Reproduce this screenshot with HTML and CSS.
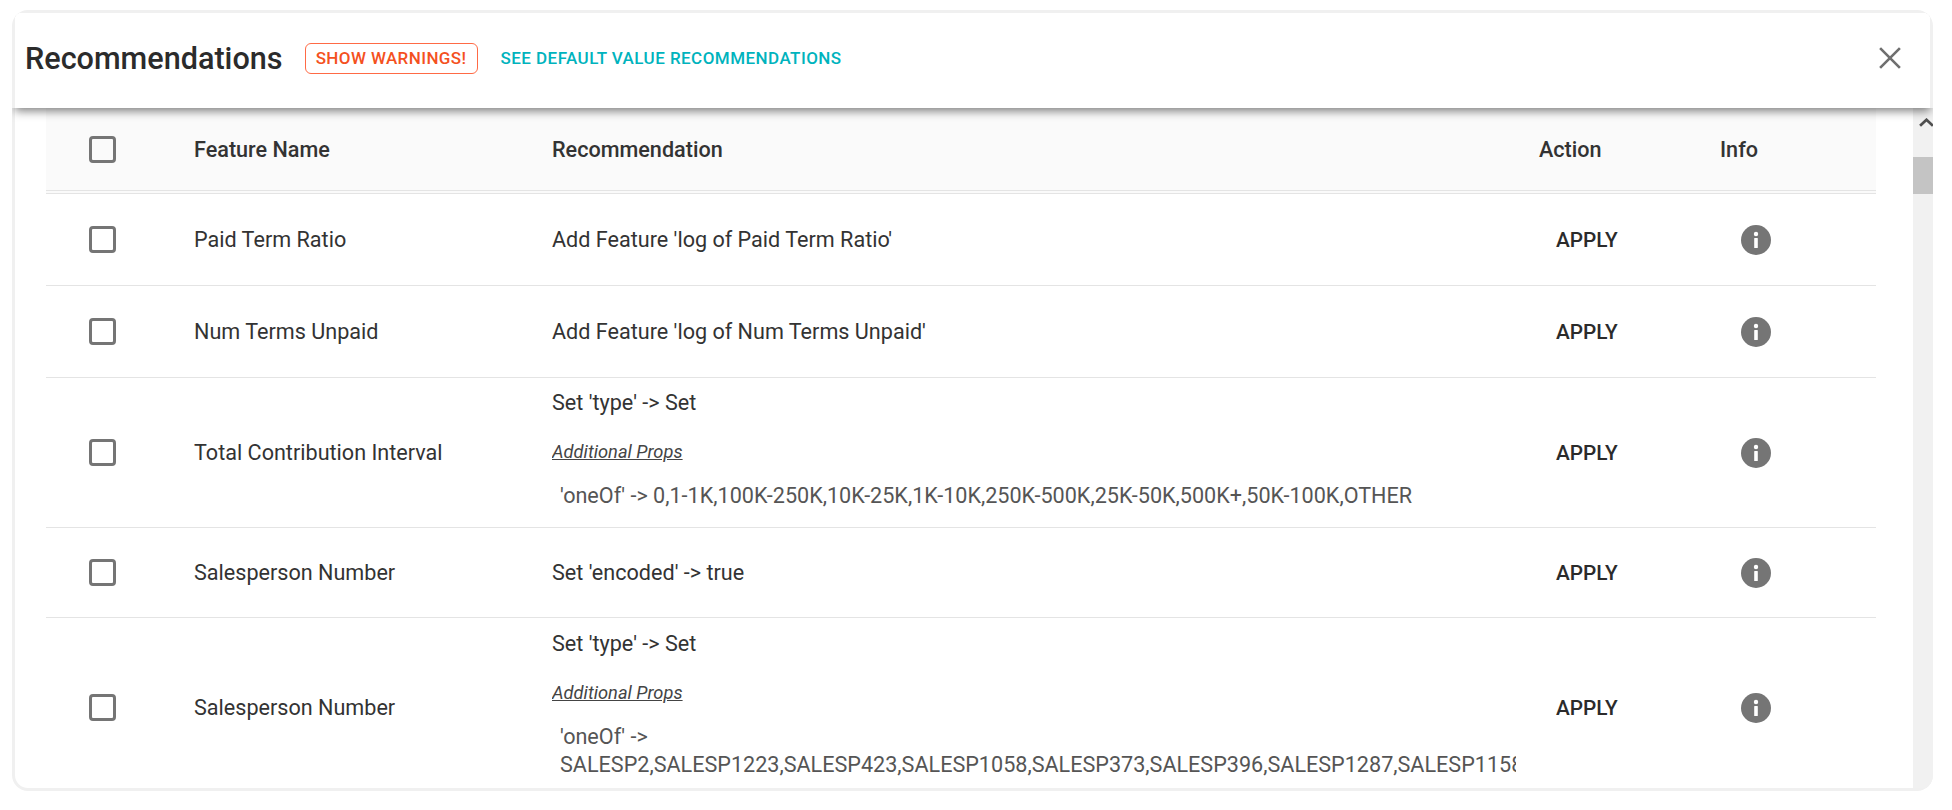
FILE: index.html
```html
<!DOCTYPE html>
<html lang="en">
<head>
<meta charset="utf-8">
<title>Recommendations</title>
<link rel="stylesheet" href="styles.css">
</head>
<body>
<section class="modal">
  <header class="modal-header">
    <h1 class="modal-title">Recommendations</h1>
    <button class="warn-btn">SHOW WARNINGS!</button>
    <a class="default-link">SEE DEFAULT VALUE RECOMMENDATIONS</a>
    <svg class="close-icon" viewBox="0 0 20 20"><path d="M1 1L19 19M19 1L1 19"/></svg>
  </header>
  <div class="modal-body">
    <div class="table">
      <div class="row row-head">
        <span class="checkbox"></span>
        <span>Feature Name</span>
        <span>Recommendation</span>
        <span class="action-head">Action</span>
        <span>Info</span>
      </div>
      <div class="row row-a">
        <span class="checkbox"></span>
        <span>Paid Term Ratio</span>
        <div class="rec">Add Feature 'log of Paid Term Ratio'</div>
        <span class="apply">APPLY</span>
        <svg class="info" viewBox="0 0 30 30"><circle cx="15" cy="15" r="15"/><rect class="info-i" x="13.2" y="13" width="3.6" height="10" rx=".6"/><circle class="info-i" cx="15" cy="9" r="2.2"/></svg>
      </div>
      <div class="row row-a">
        <span class="checkbox"></span>
        <span>Num Terms Unpaid</span>
        <div class="rec">Add Feature 'log of Num Terms Unpaid'</div>
        <span class="apply">APPLY</span>
        <svg class="info" viewBox="0 0 30 30"><circle cx="15" cy="15" r="15"/><rect class="info-i" x="13.2" y="13" width="3.6" height="10" rx=".6"/><circle class="info-i" cx="15" cy="9" r="2.2"/></svg>
      </div>
      <div class="row row-c">
        <span class="checkbox"></span>
        <span>Total Contribution Interval</span>
        <div class="rec rec-props">
          <div>Set 'type' -&gt; Set</div>
          <div class="props-label">Additional Props</div>
          <div class="props-value">'oneOf' -&gt; 0,1-1K,100K-250K,10K-25K,1K-10K,250K-500K,25K-50K,500K+,50K-100K,OTHER</div>
        </div>
        <span class="apply">APPLY</span>
        <svg class="info" viewBox="0 0 30 30"><circle cx="15" cy="15" r="15"/><rect class="info-i" x="13.2" y="13" width="3.6" height="10" rx=".6"/><circle class="info-i" cx="15" cy="9" r="2.2"/></svg>
      </div>
      <div class="row row-d">
        <span class="checkbox"></span>
        <span>Salesperson Number</span>
        <div class="rec">Set 'encoded' -&gt; true</div>
        <span class="apply">APPLY</span>
        <svg class="info" viewBox="0 0 30 30"><circle cx="15" cy="15" r="15"/><rect class="info-i" x="13.2" y="13" width="3.6" height="10" rx=".6"/><circle class="info-i" cx="15" cy="9" r="2.2"/></svg>
      </div>
      <div class="row row-e">
        <span class="checkbox"></span>
        <span>Salesperson Number</span>
        <div class="rec rec-props">
          <div>Set 'type' -&gt; Set</div>
          <div class="props-label">Additional Props</div>
          <div class="props-value">'oneOf' -&gt; SALESP2,SALESP1223,SALESP423,SALESP1058,SALESP373,SALESP396,SALESP1287,SALESP1158,SALESP1044,SALESP212</div>
        </div>
        <span class="apply">APPLY</span>
        <svg class="info" viewBox="0 0 30 30"><circle cx="15" cy="15" r="15"/><rect class="info-i" x="13.2" y="13" width="3.6" height="10" rx=".6"/><circle class="info-i" cx="15" cy="9" r="2.2"/></svg>
      </div>
    </div>
    <div class="scrollbar">
      <svg class="scroll-arrow" viewBox="0 0 14 8"><path d="M1 7L7 1.5L13 7"/></svg>
      <div class="scroll-thumb"></div>
    </div>
  </div>
</section>
</body>
</html>
```

FILE: styles.css
```css
* { box-sizing: border-box; }
html, body { height: 100%; }
body {
  margin: 0;
  padding: 10px 19px 19px 12px;
  background: #fff;
  font-family: Roboto, "Liberation Sans", sans-serif;
  font-size: 21.6px;
  color: #333;
  overflow: hidden;
}
.modal {
  height: 781px;
  border: 3px solid #f0f0f0;
  border-radius: 16px;
  background: #fff;
  display: flex;
  flex-direction: column;
  overflow: clip;
  overflow-clip-margin: border-box;
}
.modal-header {
  flex: none;
  height: 95px;
  display: flex;
  align-items: center;
  padding: 0 29px 5px 10px;
  background: #fff;
  position: relative;
  z-index: 2;
  box-shadow: 0 3px 9px rgba(0, 0, 0, .5);
  clip-path: polygon(0 0, 100% 0, 100% 100%, calc(100% + 3px) 100%, calc(100% + 3px) calc(100% + 14px), -3px calc(100% + 14px), -3px 100%, 0 100%);
}
.modal-title {
  margin: 0 22px 0 0;
  font-size: 30.6px;
  font-weight: 500;
  color: #2b2b2b;
}
.warn-btn {
  height: 31px;
  width: 173px;
  padding: 0;
  border: 1.5px solid #ff6a45;
  border-radius: 6px;
  background: #fff;
  color: #f4511e;
  font: 500 17px Roboto, sans-serif;
  letter-spacing: .4px;
}
.default-link {
  margin-left: 23px;
  color: #00b3bd;
  font-size: 17px;
  font-weight: 500;
  letter-spacing: .45px;
}
.close-icon {
  width: 22px;
  height: 22px;
  margin-left: auto;
  fill: none;
  stroke: #707070;
  stroke-width: 2.4;
}
.modal-body {
  flex: 1;
  min-height: 0;
  display: flex;
  overflow: visible;
}
.table {
  flex: none;
  width: 1830px;
  height: 100%;
  margin: 0 37px 0 31px;
  overflow: hidden;
}
.row {
  display: grid;
  grid-template-columns: 148px 358px 964px 204px 156px;
  align-items: center;
  border-bottom: 1px solid #e4e4e4;
}
.row-head {
  height: 86px;
  background: #fafafa;
  font-weight: 500;
  border-bottom: 4px double #e4e4e4;
}
.row-a { height: 92px; }
.row-c { height: 150px; }
.row-d { height: 90px; }
.row-e { height: 180px; }
.checkbox {
  width: 27px;
  height: 27px;
  margin-left: 43px;
  border: 3px solid #757575;
  border-radius: 4px;
}
.rec {
  min-width: 0;
  overflow: hidden;
}
.rec-props { padding-bottom: 5px; }
.props-label {
  margin-top: 26px;
  font-size: 18.3px;
  font-style: italic;
  text-decoration: underline;
  color: #444;
}
.props-value {
  margin-top: 20px;
  padding-left: 8px;
  color: #555;
  line-height: 28px;
}
.action-head { margin-left: 23px; }
.apply {
  margin-left: 40px;
  font-size: 20.8px;
  font-weight: 500;
  color: #2b2b2b;
}
.info {
  width: 30px;
  height: 30px;
  margin-left: 21px;
  fill: #757575;
}
.info-i { fill: #fff; }
.scrollbar {
  flex: 1;
  margin-right: -3px;
  background: #f1f1f1;
  display: flex;
  flex-direction: column;
  align-items: center;
}
.scroll-arrow {
  width: 15px;
  height: 9px;
  margin-top: 10px;
  margin-left: 6px;
  fill: none;
  stroke: #505050;
  stroke-width: 2.6;
}
.scroll-thumb {
  width: 100%;
  height: 37px;
  margin-top: 30px;
  background: #c4c4c4;
}
```
